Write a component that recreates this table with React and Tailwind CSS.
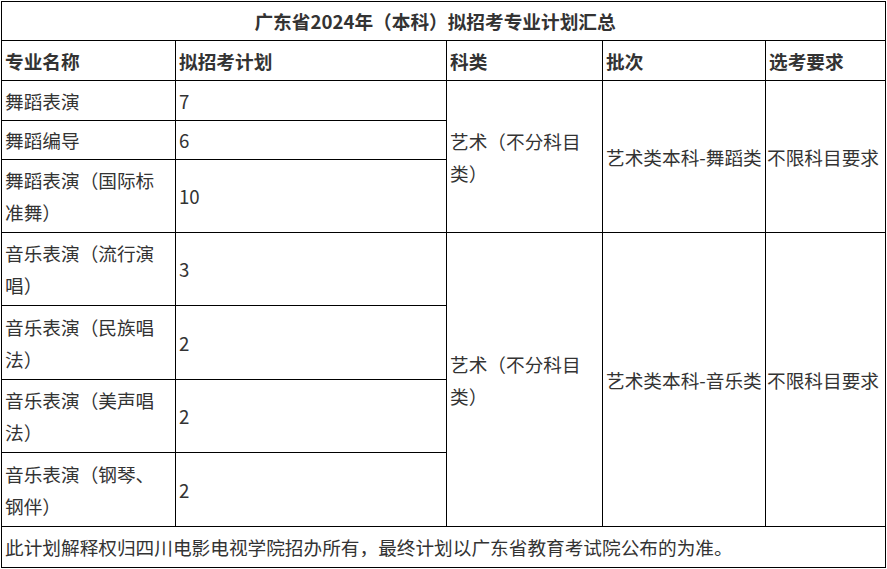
import React from "react";

const rows = [
  { name: ["舞蹈表演"], n: "7", h: "h-[40px]" },
  { name: ["舞蹈编导"], n: "6", h: "h-[39px]" },
  { name: ["舞蹈表演（国际标", "准舞）"], n: "10", h: "h-[73px]" },
  { name: ["音乐表演（流行演", "唱）"], n: "3", h: "h-[73px]" },
  { name: ["音乐表演（民族唱", "法）"], n: "2", h: "h-[74px]" },
  { name: ["音乐表演（美声唱", "法）"], n: "2", h: "h-[73px]" },
  { name: ["音乐表演（钢琴、", "钢伴）"], n: "2", h: "h-[74px]" },
];

const td = "border border-black px-[3px] py-0 align-middle text-left";

export default function App() {
  return (
    <div
      className="w-[887px] h-[569px] bg-white pl-[1px] pt-[1px] text-[18.67px] leading-[32px] text-[#333]"
      style={{ fontFamily: '"Noto Sans CJK SC", "Noto Sans", sans-serif' }}
    >
      <table className="table-fixed border-collapse w-[885px]">
        <colgroup>
          <col className="w-[174px]" />
          <col className="w-[271px]" />
          <col className="w-[156px]" />
          <col className="w-[163px]" />
          <col className="w-[120px]" />
        </colgroup>
        <tbody>
          <tr className="h-[39px]">
            <td colSpan={5} className="border border-black pl-[3px] pr-[20px] text-center align-middle font-bold whitespace-nowrap">
              广东省2024年（本科）拟招考专业计划汇总
            </td>
          </tr>
          <tr className="h-[40px] font-bold">
            <td className={td}>专业名称</td>
            <td className={td}>拟招考计划</td>
            <td className={td}>科类</td>
            <td className={td}>批次</td>
            <td className={td}>选考要求</td>
          </tr>
          {rows.map((r, i) => (
            <tr key={i} className={r.h}>
              <td className={td}>
                {r.name.map((t, j) => (
                  <div key={j} className="whitespace-nowrap">{t}</div>
                ))}
              </td>
              <td className={td}>{r.n}</td>
              {(i === 0 || i === 3) && (
                <>
                  <td rowSpan={i === 0 ? 3 : 4} className={td}>
                    <div className="whitespace-nowrap">艺术（不分科目</div>
                    <div>类）</div>
                  </td>
                  <td rowSpan={i === 0 ? 3 : 4} className="border border-black pl-[3px] pr-0 align-middle text-left whitespace-nowrap">
                    {i === 0 ? "艺术类本科-舞蹈类" : "艺术类本科-音乐类"}
                  </td>
                  <td rowSpan={i === 0 ? 3 : 4} className="border border-black pl-[1px] pr-0 align-middle text-left whitespace-nowrap">
                    不限科目要求
                  </td>
                </>
              )}
            </tr>
          ))}
          <tr className="h-[41px]">
            <td colSpan={5} className={`${td} whitespace-nowrap`}>
              此计划解释权归四川电影电视学院招办所有，最终计划以广东省教育考试院公布的为准。
            </td>
          </tr>
        </tbody>
      </table>
    </div>
  );
}
